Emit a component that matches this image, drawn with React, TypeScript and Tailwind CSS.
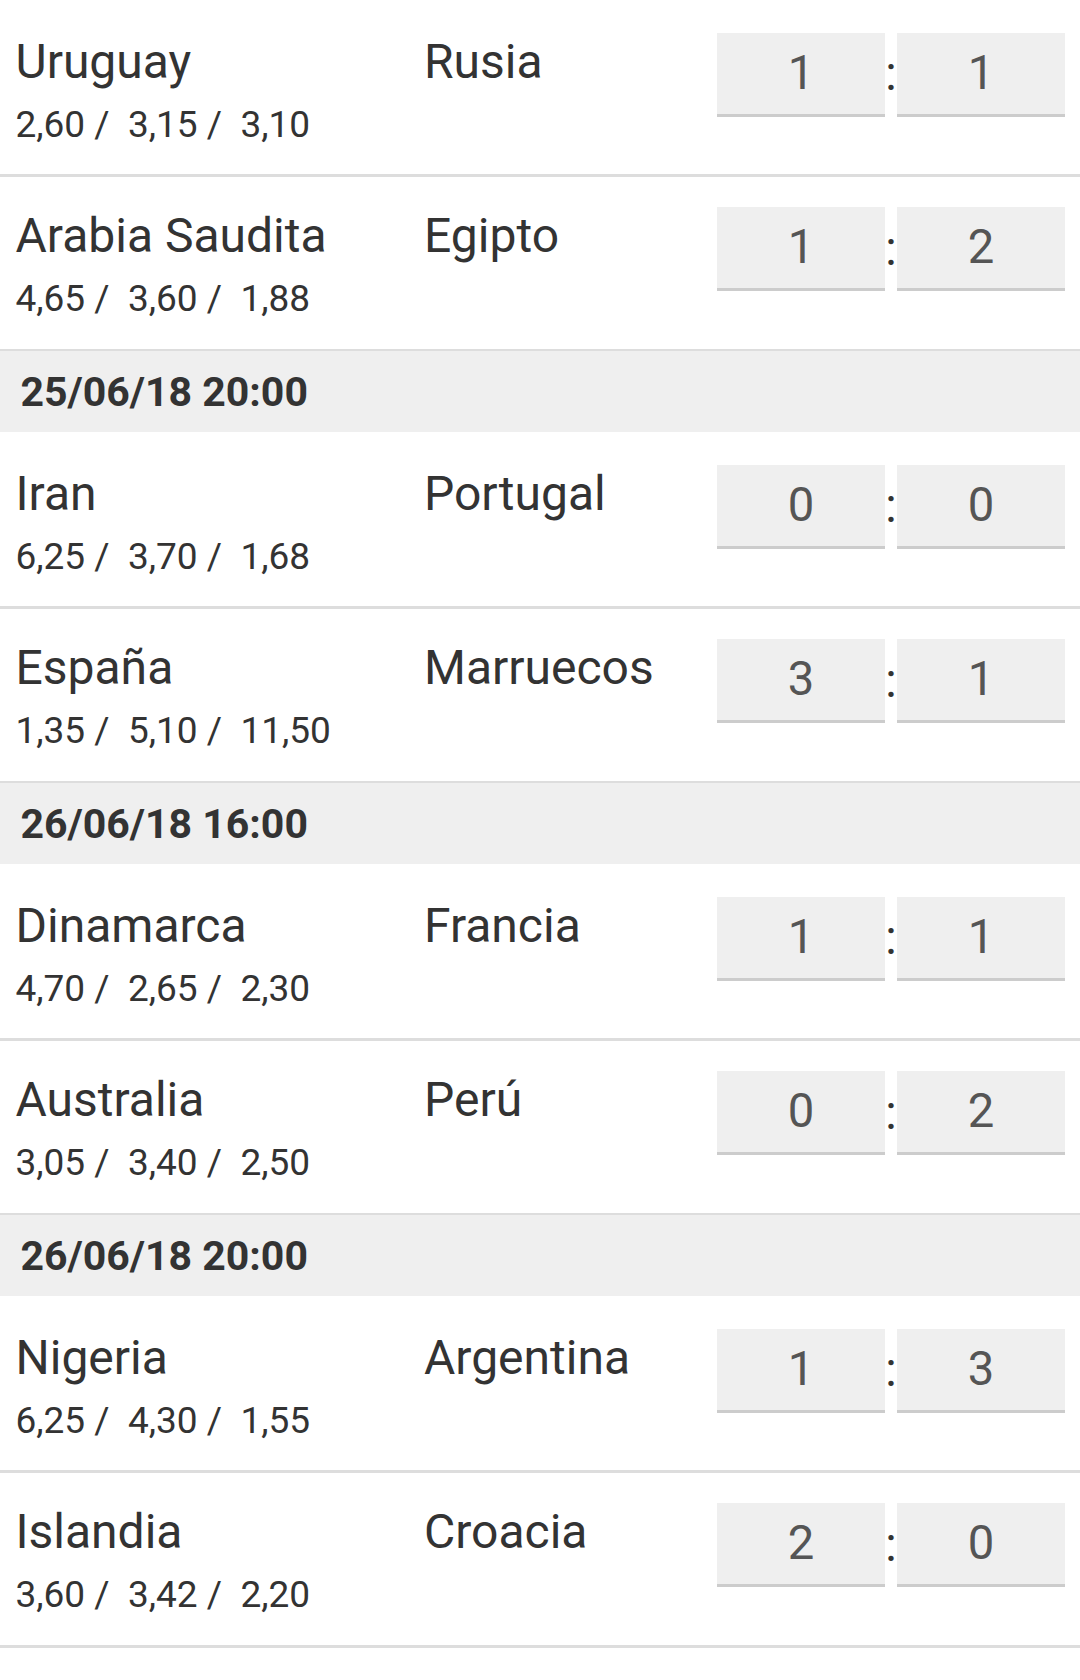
type Match = {
  home: string;
  away: string;
  odds: [string, string, string];
  score: [number, number];
};

type Group = {
  date: string | null;
  matches: Match[];
};

const groups: Group[] = [
  {
    date: null,
    matches: [
      { home: 'Uruguay', away: 'Rusia', odds: ['2,60', '3,15', '3,10'], score: [1, 1] },
      { home: 'Arabia Saudita', away: 'Egipto', odds: ['4,65', '3,60', '1,88'], score: [1, 2] },
    ],
  },
  {
    date: '25/06/18 20:00',
    matches: [
      { home: 'Iran', away: 'Portugal', odds: ['6,25', '3,70', '1,68'], score: [0, 0] },
      { home: 'España', away: 'Marruecos', odds: ['1,35', '5,10', '11,50'], score: [3, 1] },
    ],
  },
  {
    date: '26/06/18 16:00',
    matches: [
      { home: 'Dinamarca', away: 'Francia', odds: ['4,70', '2,65', '2,30'], score: [1, 1] },
      { home: 'Australia', away: 'Perú', odds: ['3,05', '3,40', '2,50'], score: [0, 2] },
    ],
  },
  {
    date: '26/06/18 20:00',
    matches: [
      { home: 'Nigeria', away: 'Argentina', odds: ['6,25', '4,30', '1,55'], score: [1, 3] },
      { home: 'Islandia', away: 'Croacia', odds: ['3,60', '3,42', '2,20'], score: [2, 0] },
    ],
  },
];

const ScoreBox = ({ value }: { value: number }) => (
  <div className="w-[168px] h-[84px] bg-[#efefef] border-b-[3px] border-[#cccccc] flex items-center justify-center text-[47.25px] leading-none text-[#555555]">
    {value}
  </div>
);

const MatchRow = ({ match, first }: { match: Match; first: boolean }) => (
  <div
    className={`h-[174.3px] flex items-start pl-[15.5px] pr-[15px] ${
      first ? 'pt-[33px]' : 'border-t-[3px] border-[#dddddd] pt-[30px]'
    }`}
  >
    <div className="w-[408.5px] pt-[0.65px]">
      <div className="text-[48px] leading-[56px] text-[#333333] whitespace-nowrap">{match.home}</div>
      <div className="mt-[12.95px] text-[37px] leading-[44px] text-[#333333] whitespace-pre">
        {match.odds.join(' /  ')}
      </div>
    </div>
    <div className="flex-1 pt-[0.65px] text-[48px] leading-[56px] text-[#333333] whitespace-nowrap">
      {match.away}
    </div>
    <div className="w-[348px] flex items-center">
      <ScoreBox value={match.score[0]} />
      <div className="w-[12px] text-center text-[47.25px] leading-none text-[#333333]">:</div>
      <ScoreBox value={match.score[1]} />
    </div>
  </div>
);

const App = () => {
  return (
    <div className="min-h-screen bg-white font-[Roboto,sans-serif]">
      {groups.map((group, gi) => (
        <div key={gi}>
          {group.date && (
            <div className="h-[83.4px] border-t-[2px] border-[#dddddd] bg-[#efefef] pl-[20.5px] pt-[17.4px]">
              <span className="text-[41px] leading-[48px] font-bold text-[#333333]">{group.date}</span>
            </div>
          )}
          {group.matches.map((match, mi) => (
            <MatchRow key={match.home} match={match} first={mi === 0} />
          ))}
        </div>
      ))}
      <div className="h-[3px] bg-[#dddddd]" />
    </div>
  );
};

export default App;
